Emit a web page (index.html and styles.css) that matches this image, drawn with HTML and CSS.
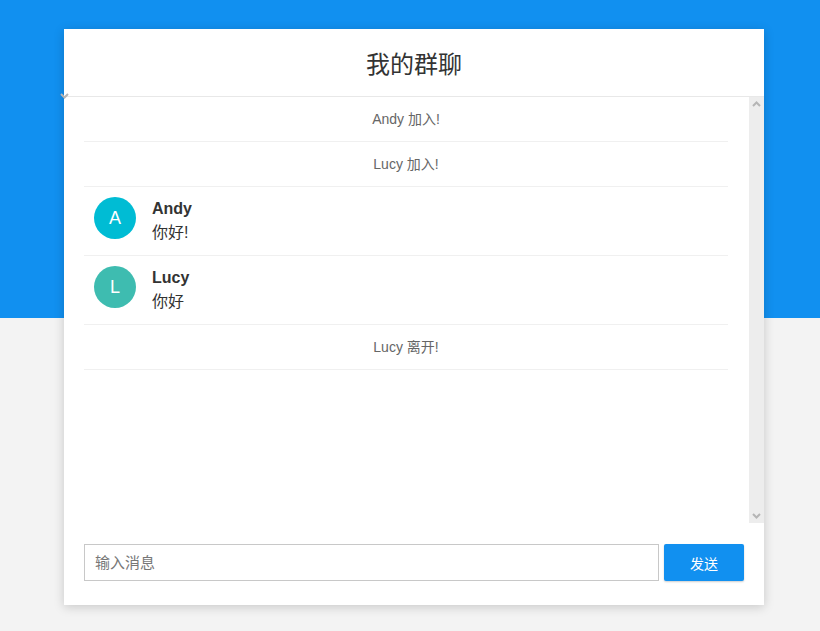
FILE: index.html
```html
<!DOCTYPE html>
<html lang="zh">
<head>
<meta charset="utf-8">
<title>我的群聊</title>
<link rel="stylesheet" href="styles.css">
</head>
<body>
<div class="page">
  <div class="card">
    <svg class="stray-chevron" width="9" height="6" viewBox="0 0 9 6"><path d="M1 1 L4.5 4.5 L8 1" fill="none" stroke="#b5b5b5" stroke-width="2"/></svg>
    <header class="card-header">我的群聊</header>
    <div class="messages">
      <ul class="msg-list">
        <li class="sys">Andy 加入!</li>
        <li class="sys">Lucy 加入!</li>
        <li class="chat">
          <div class="avatar avatar-a">A</div>
          <div class="chat-body">
            <div class="name">Andy</div>
            <div class="text">你好!</div>
          </div>
        </li>
        <li class="chat">
          <div class="avatar avatar-l">L</div>
          <div class="chat-body">
            <div class="name">Lucy</div>
            <div class="text">你好</div>
          </div>
        </li>
        <li class="sys">Lucy 离开!</li>
      </ul>
      <div class="scrollbar">
        <svg class="arrow" width="9" height="6" viewBox="0 0 9 6"><path d="M1 5 L4.5 1.5 L8 5" fill="none" stroke="#b5b5b5" stroke-width="2"/></svg>
        <svg class="arrow" width="9" height="6" viewBox="0 0 9 6"><path d="M1 1 L4.5 4.5 L8 1" fill="none" stroke="#b5b5b5" stroke-width="2"/></svg>
      </div>
    </div>
    <footer class="composer">
      <input class="msg-input" type="text" placeholder="输入消息">
      <button class="send-btn">发送</button>
    </footer>
  </div>
</div>
</body>
</html>
```
FILE: styles.css
```css
* { box-sizing: border-box; }
html, body { margin: 0; padding: 0; }
body {
  font-family: "Liberation Sans", "Noto Sans CJK SC", sans-serif;
  background: linear-gradient(#1190f0 0, #1190f0 318px, #f3f3f3 318px, #f3f3f3 100%);
  min-height: 631px;
  color: #333;
}
.page {
  padding: 29px 0 0 8px;
  display: flex;
  justify-content: center;
}
.card {
  position: relative;
  width: 700px;
  height: 576px;
  background: #fff;
  box-shadow: 0 2px 10px rgba(0,0,0,0.18);
  display: flex;
  flex-direction: column;
}
.stray-chevron {
  position: absolute;
  left: -4px;
  top: 64px;
}
.card-header {
  height: 68px;
  border-bottom: 1px solid #e8e8e8;
  display: flex;
  align-items: center;
  justify-content: center;
  font-size: 24px;
  color: #333;
}
.messages {
  height: 426px;
  display: flex;
}
.msg-list {
  list-style: none;
  margin: 0;
  padding: 0 21px 0 20px;
  flex: 1;
}
.sys {
  height: 45px;
  border-bottom: 1px solid #f0f0f0;
  display: flex;
  align-items: center;
  justify-content: center;
  font-size: 14px;
  color: #666;
  padding-bottom: 2px;
}
.chat {
  display: flex;
  align-items: flex-start;
  gap: 16px;
  padding: 10px 10px 0 10px;
  height: 69px;
  border-bottom: 1px solid #f0f0f0;
}
.avatar {
  width: 42px;
  height: 42px;
  border-radius: 50%;
  color: #fff;
  font-size: 18px;
  display: flex;
  align-items: center;
  justify-content: center;
  flex: none;
}
.avatar-a { background: #00bcd4; }
.avatar-l { background: #3ebcb0; }
.name {
  font-size: 16px;
  font-weight: bold;
  line-height: 23px;
  color: #333;
}
.text {
  font-size: 16px;
  line-height: 24px;
  margin-top: 1px;
  color: #333;
}
.scrollbar {
  width: 15px;
  background: #ededed;
  display: flex;
  flex-direction: column;
  justify-content: space-between;
  align-items: center;
  padding: 4px 0 4px;
}
.composer {
  flex: 1;
  display: flex;
  gap: 5px;
  padding: 21px 20px 0 20px;
}
.msg-input {
  width: 575px;
  height: 37px;
  border: 1px solid #c8c8c8;
  padding: 0 10px;
  font-family: inherit;
  font-size: 15px;
  color: #333;
  outline: none;
}
.msg-input::placeholder { color: #777; }
.send-btn {
  width: 80px;
  height: 37px;
  border: none;
  border-radius: 2px;
  background: #1190f0;
  color: #fff;
  font-family: inherit;
  font-size: 14px;
  box-shadow: 0 1px 2px rgba(0,0,0,0.2);
}
```
